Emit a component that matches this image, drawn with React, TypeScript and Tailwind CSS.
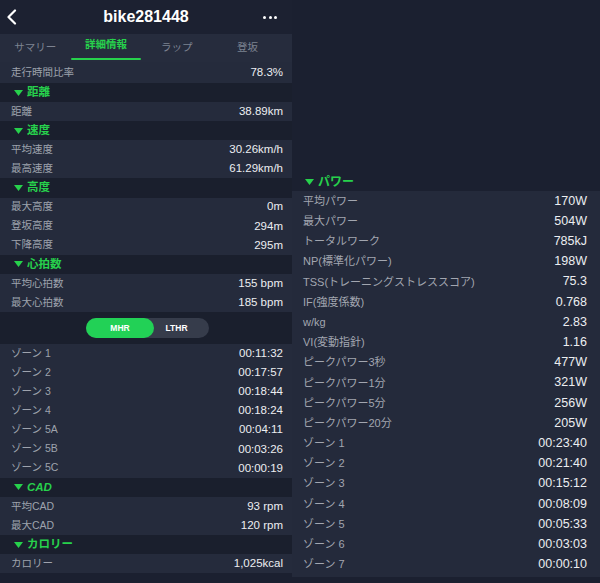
import React from "react";

const FONT = { fontFamily: '"Liberation Sans", "Noto Sans CJK JP", sans-serif' };

function Tri({ className = "" }: { className?: string }) {
  return (
    <svg width="9" height="6" viewBox="0 0 9 6" className={className}>
      <polygon points="0,0 9,0 4.5,6" fill="#27d14c" />
    </svg>
  );
}

function LRow({ label, value }: { label: string; value: string }) {
  return (
    <div className="h-[19.1px] flex items-center justify-between pl-[11px] pr-[9px] bg-[#252b3c]">
      <span className="text-[10.5px] text-[#9ea3ad]">{label}</span>
      <span className="text-[11.5px] text-[#eceef1]">{value}</span>
    </div>
  );
}

function LHead({ title, italic }: { title: string; italic?: boolean }) {
  return (
    <div className="h-[19.1px] flex items-center pl-[14px] bg-[#1a1f2d] gap-[4px]">
      <Tri />
      <span className={`text-[11.5px] font-bold text-[#27d14c] ${italic ? "italic" : ""}`}>{title}</span>
    </div>
  );
}

function RRow({ label, value }: { label: string; value: string }) {
  return (
    <div className="h-[20.2px] flex items-center justify-between pl-[11px] pr-[13px]">
      <span className="text-[11px] text-[#a2a6b0]">{label}</span>
      <span className="text-[12.5px] text-[#eceef1]">{value}</span>
    </div>
  );
}

export default function App() {
  const power: [string, string][] = [
    ["平均パワー", "170W"],
    ["最大パワー", "504W"],
    ["トータルワーク", "785kJ"],
    ["NP(標準化パワー)", "198W"],
    ["TSS(トレーニングストレススコア)", "75.3"],
    ["IF(強度係数)", "0.768"],
    ["w/kg", "2.83"],
    ["VI(変動指針)", "1.16"],
    ["ピークパワー3秒", "477W"],
    ["ピークパワー1分", "321W"],
    ["ピークパワー5分", "256W"],
    ["ピークパワー20分", "205W"],
    ["ゾーン 1", "00:23:40"],
    ["ゾーン 2", "00:21:40"],
    ["ゾーン 3", "00:15:12"],
    ["ゾーン 4", "00:08:09"],
    ["ゾーン 5", "00:05:33"],
    ["ゾーン 6", "00:03:03"],
    ["ゾーン 7", "00:00:10"],
  ];
  const zones: [string, string][] = [
    ["ゾーン 1", "00:11:32"],
    ["ゾーン 2", "00:17:57"],
    ["ゾーン 3", "00:18:44"],
    ["ゾーン 4", "00:18:24"],
    ["ゾーン 5A", "00:04:11"],
    ["ゾーン 5B", "00:03:26"],
    ["ゾーン 5C", "00:00:19"],
  ];
  return (
    <div className="w-[600px] h-[583px] bg-[#1b2030] flex overflow-hidden" style={FONT}>
      {/* Left panel */}
      <div className="w-[292px] flex flex-col">
        <div className="h-[34px] bg-[#1c2131] flex items-center justify-between px-[5px] relative">
          <svg width="12" height="16" viewBox="0 0 12 16" className="ml-[1px]">
            <polyline points="9,1.5 2.5,8 9,14.5" fill="none" stroke="#ffffff" strokeWidth="2.2" strokeLinecap="round" strokeLinejoin="round" />
          </svg>
          <span className="absolute left-0 right-0 text-center text-[16px] font-bold text-white">bike281448</span>
          <div className="flex gap-[2.5px] mr-[10px]">
            <span className="w-[3px] h-[3px] rounded-full bg-white" />
            <span className="w-[3px] h-[3px] rounded-full bg-white" />
            <span className="w-[3px] h-[3px] rounded-full bg-white" />
          </div>
        </div>
        <div className="h-[28px] bg-[#262c3d] flex">
          <div className="w-[70.7px] flex items-center justify-center text-[10.5px] text-[#7d8391]">サマリー</div>
          <div className="w-[70.7px] flex flex-col items-center justify-end">
            <span className="text-[10.5px] font-bold text-[#27d14c] mb-[5px]">詳細情報</span>
            <div className="w-[70px] h-[2.5px] bg-[#27d14c] mb-[2px] rounded-full" />
          </div>
          <div className="w-[70.7px] flex items-center justify-center text-[10.5px] text-[#7d8391]">ラップ</div>
          <div className="w-[70.7px] flex items-center justify-center text-[10.5px] text-[#7d8391]">登坂</div>
        </div>
        <div className="h-[21px] flex items-center justify-between pl-[11px] pr-[9px] bg-[#252b3c]">
          <span className="text-[10.5px] text-[#9ea3ad]">走行時間比率</span>
          <span className="text-[11.5px] text-[#eceef1]">78.3%</span>
        </div>
        <LHead title="距離" />
        <LRow label="距離" value="38.89km" />
        <LHead title="速度" />
        <LRow label="平均速度" value="30.26km/h" />
        <LRow label="最高速度" value="61.29km/h" />
        <LHead title="高度" />
        <LRow label="最大高度" value="0m" />
        <LRow label="登坂高度" value="294m" />
        <LRow label="下降高度" value="295m" />
        <LHead title="心拍数" />
        <LRow label="平均心拍数" value="155 bpm" />
        <LRow label="最大心拍数" value="185 bpm" />
        <div className="h-[32px] bg-[#1a1f2d] flex items-center pl-[86px]">
          <div className="w-[123px] h-[20px] rounded-full bg-[#363c4b] flex">
            <div className="w-[68px] h-[20px] rounded-full bg-[#22d156] flex items-center justify-center text-[8.5px] font-bold text-white">MHR</div>
            <div className="w-[55px] flex items-center justify-center text-[8.5px] font-bold text-white pr-[10px]">LTHR</div>
          </div>
        </div>
        {zones.map(([l, v]) => (
          <LRow key={l} label={l} value={v} />
        ))}
        <LHead title="CAD" italic />
        <LRow label="平均CAD" value="93 rpm" />
        <LRow label="最大CAD" value="120 rpm" />
        <LHead title="カロリー" />
        <LRow label="カロリー" value="1,025kcal" />
      </div>
      {/* Right panel */}
      <div className="flex-1 flex flex-col pt-[172px]">
        <div className="h-[19px] flex items-center pl-[13px] gap-[4px]">
          <Tri />
          <span className="text-[12px] font-bold text-[#27d14c]">パワー</span>
        </div>
        <div className="bg-[#242a3b] pb-[2px]">
          {power.map(([l, v]) => (
            <RRow key={l} label={l} value={v} />
          ))}
        </div>
      </div>
    </div>
  );
}
